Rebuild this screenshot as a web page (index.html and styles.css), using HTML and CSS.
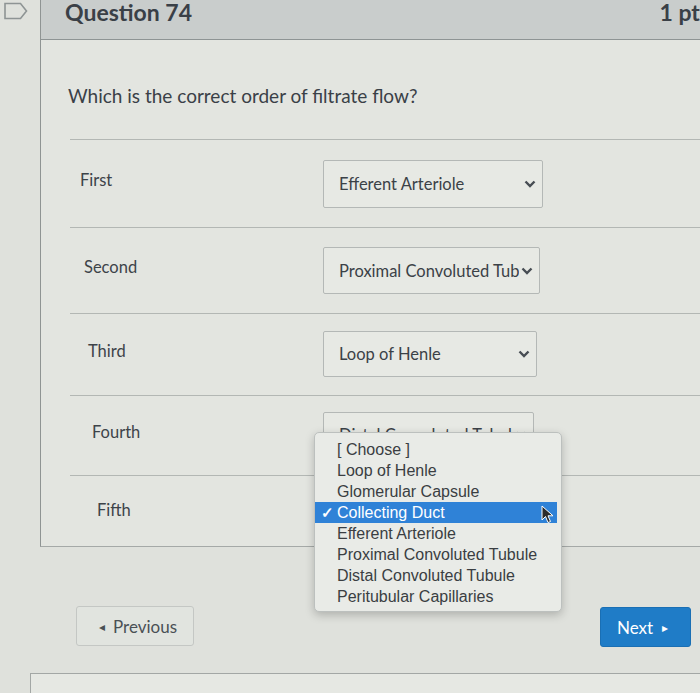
FILE: index.html
```html
<!DOCTYPE html>
<html lang="en">
<head>
<meta charset="utf-8">
<title>Question 74</title>
<link rel="stylesheet" href="styles.css">
</head>
<body>
<div class="page">
  <aside class="sidebar">
    <svg class="flag" width="26" height="20" viewBox="0 0 26 20"><path d="M2 2.5 H17.5 L23.5 10 L17.5 17.5 H2 Z" fill="none" stroke="#8e9494" stroke-width="1.6"/></svg>
  </aside>
  <main class="main">
    <section class="card">
      <header class="card-header">
        <h1 class="title">Question 74</h1>
        <span class="points">1 pts</span>
      </header>
      <p class="question">Which is the correct order of filtrate flow?</p>
      <div class="rows">
        <div class="row row-1">
          <span class="label">First</span>
          <div class="select"><span class="value">Efferent Arteriole</span><svg class="chev" width="12" height="8" viewBox="0 0 12 8"><path d="M1.5 1.5 L6 6 L10.5 1.5" fill="none" stroke="#474d53" stroke-width="2.4"/></svg></div>
        </div>
        <div class="row row-2">
          <span class="label">Second</span>
          <div class="select"><span class="value">Proximal Convoluted Tubule</span><svg class="chev" width="12" height="8" viewBox="0 0 12 8"><path d="M1.5 1.5 L6 6 L10.5 1.5" fill="none" stroke="#474d53" stroke-width="2.4"/></svg></div>
        </div>
        <div class="row row-3">
          <span class="label">Third</span>
          <div class="select"><span class="value">Loop of Henle</span><svg class="chev" width="12" height="8" viewBox="0 0 12 8"><path d="M1.5 1.5 L6 6 L10.5 1.5" fill="none" stroke="#474d53" stroke-width="2.4"/></svg></div>
        </div>
        <div class="row row-4">
          <span class="label">Fourth</span>
          <div class="select open"><span class="value">Distal Convoluted Tubule</span><svg class="chev" width="12" height="8" viewBox="0 0 12 8"><path d="M1.5 1.5 L6 6 L10.5 1.5" fill="none" stroke="#474d53" stroke-width="2.4"/></svg>
            <ul class="menu">
              <li>[ Choose ]</li>
              <li>Loop of Henle</li>
              <li>Glomerular Capsule</li>
              <li class="selected"><span class="check">✓</span>Collecting Duct<svg class="cursor" width="14" height="20" viewBox="0 0 14 20"><path d="M1 1 L1 15 L4.5 11.5 L7 17.5 L9.5 16.5 L7 10.8 L12 10.8 Z" fill="#2b2b2b" stroke="#ffffff" stroke-width="1"/></svg></li>
              <li>Efferent Arteriole</li>
              <li>Proximal Convoluted Tubule</li>
              <li>Distal Convoluted Tubule</li>
              <li>Peritubular Capillaries</li>
            </ul>
          </div>
        </div>
        <div class="row row-5">
          <span class="label">Fifth</span>
          <div class="select"><span class="value">Collecting Duct</span><svg class="chev" width="12" height="8" viewBox="0 0 12 8"><path d="M1.5 1.5 L6 6 L10.5 1.5" fill="none" stroke="#474d53" stroke-width="2.4"/></svg></div>
        </div>
      </div>
    </section>
    <nav class="pager">
      <button class="btn prev"><span class="tri">◂</span>Previous</button>
      <button class="btn next">Next<span class="tri">▸</span></button>
    </nav>
    <div class="next-card"></div>
  </main>
</div>
</body>
</html>
```

FILE: styles.css
```css
* { box-sizing: border-box; }
html, body { margin: 0; padding: 0; }
body {
  background: #dfe1dc;
  font-family: Lato, "Open Sans", sans-serif;
  color: #3b4147;
  width: 700px;
  height: 693px;
  overflow: hidden;
}
.page {
  display: flex;
  width: 700px;
  height: 693px;
  overflow: hidden;
}
.sidebar {
  width: 40px;
  flex: none;
  padding: 1px 0 0 3px;
}
.flag { display: block; }
.main {
  flex: none;
  width: 670px;
  display: flex;
  flex-direction: column;
}
.card {
  border-left: 1px solid #8f9493;
  border-bottom: 1px solid #a5a9a7;
  background: #e3e5e0;
}
.card-header {
  height: 40px;
  background: #c9cdcc;
  border-bottom: 1px solid #8e9494;
  display: flex;
  justify-content: space-between;
  align-items: flex-start;
  padding-left: 24px;
}
.title {
  margin: 0;
  font-size: 23px;
  font-weight: 700;
  line-height: 24px;
  color: #3a4047;
}
.points {
  font-size: 23px;
  font-weight: 700;
  line-height: 24px;
  color: #3a4047;
  margin-right: 0;
}
.question {
  margin: 0;
  padding: 44px 0 0 27px;
  height: 99px;
  font-size: 19px;
  line-height: 24px;
  color: #3a4047;
}
.rows {
  margin-left: 29px;
}
.row {
  border-top: 1px solid #b3b7b4;
  display: flex;
  align-items: flex-start;
}
.row-1 { height: 88px; padding-top: 20px; }
.row-2 { height: 86px; padding-top: 19px; }
.row-3 { height: 82px; padding-top: 17px; }
.row-4 { height: 80px; padding-top: 16px; }
.row-5 { height: 71px; padding-top: 14px; }
.label {
  width: 253px;
  padding-left: 10px;
  padding-top: 9px;
  font-size: 16.5px;
  line-height: 22px;
  color: #3d4349;
}
.row-2 .label { padding-left: 14px; }
.row-3 .label { padding-left: 18px; }
.row-4 .label { padding-left: 22px; }
.row-5 .label { padding-left: 27px; }
.select {
  position: relative;
  width: 220px;
  height: 48px;
  border: 1px solid #b4b8b6;
  border-radius: 2px;
  background: #e7e9e4;
  display: flex;
  align-items: center;
  padding: 0 6px 0 15px;
}
.row-2 .select { width: 217px; height: 47px; }
.row-3 .select { width: 214px; height: 46px; }
.row-4 .select { width: 211px; height: 45px; }
.value {
  flex: 1;
  white-space: nowrap;
  overflow: hidden;
  font-size: 16.5px;
  color: #3b4147;
  margin-right: 2px;
}
.chev { flex: none; }
.menu {
  position: absolute;
  left: -10px;
  top: 19px;
  width: 248px;
  margin: 0;
  padding: 6px 0 4px;
  list-style: none;
  background: #e9ebe7;
  border: 1px solid #bcc0be;
  border-radius: 5px;
  box-shadow: 0 3px 10px rgba(0, 0, 0, 0.22);
  font-family: "Liberation Sans", Arial, sans-serif;
  font-size: 16px;
  color: #3a3e42;
  z-index: 5;
}
.menu li {
  position: relative;
  height: 21px;
  line-height: 21px;
  padding-left: 22px;
  white-space: nowrap;
}
.menu li.selected {
  background: #2f82d7;
  color: #ffffff;
  margin-right: 4px;
}
.check {
  position: absolute;
  left: 6px;
  top: 0;
  font-size: 15px;
  font-weight: 700;
}
.cursor {
  position: absolute;
  right: 2px;
  top: 3px;
}
.pager {
  display: flex;
  justify-content: space-between;
  align-items: flex-start;
  padding: 59px 19px 0 36px;
  height: 126px;
}
.btn {
  font-family: Lato, "Open Sans", sans-serif;
  font-size: 17px;
  height: 40px;
  border-radius: 3px;
  display: flex;
  align-items: center;
  cursor: pointer;
}
.prev {
  width: 118px;
  background: #e1e4df;
  border: 1px solid #c4c7c4;
  color: #4a5055;
  padding: 0 0 0 22px;
}
.prev .tri { font-size: 12px; margin-right: 8px; }
.next {
  width: 91px;
  background: #1f7cc7;
  border: 1px solid #1a6fb4;
  color: #ffffff;
  padding: 0 0 0 16px;
  margin-top: 1px;
}
.next .tri { font-size: 12px; margin-left: 9px; }
.next-card {
  margin-left: -10px;
  flex: 1;
  border-top: 1px solid #a3a7a5;
  border-left: 1px solid #a3a7a5;
  background: #e6e8e3;
}
```
